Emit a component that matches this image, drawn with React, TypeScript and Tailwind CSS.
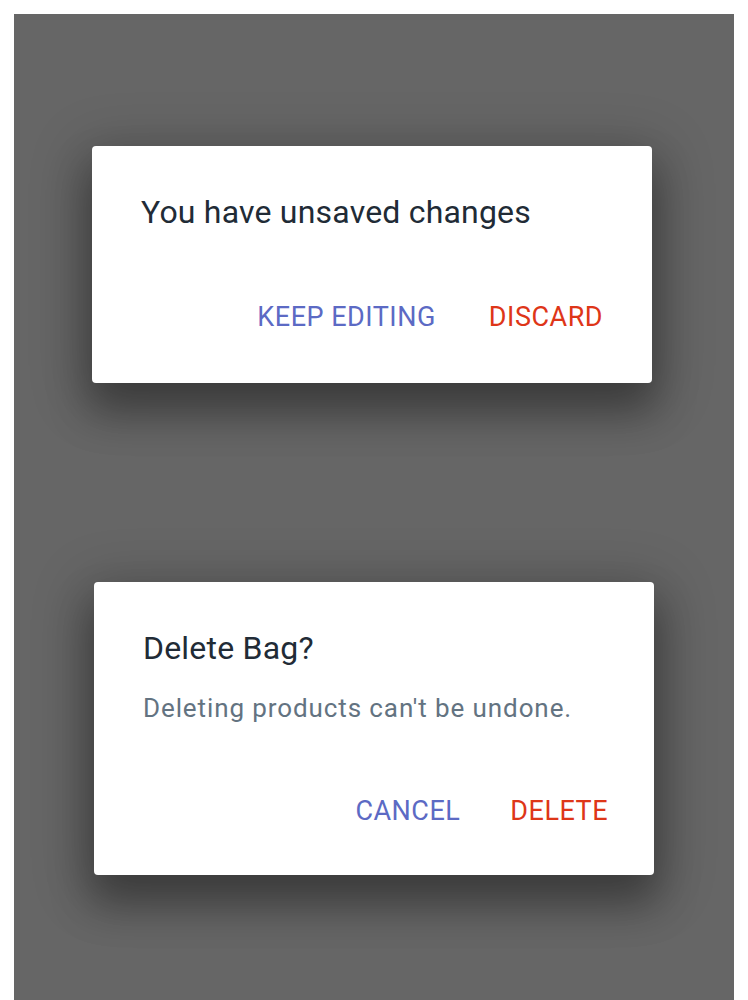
import React from "react";

const font = { fontFamily: "Roboto, 'Noto Sans', sans-serif" };

const dialogShadow =
  "shadow-[0_26px_40px_4px_rgba(0,0,0,0.3),0_10px_55px_10px_rgba(0,0,0,0.2)]";

export default function App() {
  return (
    <div className="min-h-screen bg-white px-[14px] pt-[14px]" style={font}>
      <div className="h-[986px] overflow-hidden bg-[#666666] pt-[132px]">
        {/* unsaved changes */}
        <div className={`ml-[78px] w-[560px] rounded-[4px] bg-white ${dialogShadow}`}>
          <div className="px-[49px] pt-[46px] text-[32px] leading-[40px] tracking-[0.2px] text-[#212b36]">
            You have unsaved changes
          </div>
          <div className="flex justify-end gap-[53px] pb-[50px] pr-[49px] pt-[69px] text-[27px] leading-[32px] tracking-[0.5px]">
            <button className="text-[#5c6ac4]">KEEP EDITING</button>
            <button className="text-[#de3618]">DISCARD</button>
          </div>
        </div>

        {/* delete bag */}
        <div className={`ml-[80px] mt-[199px] w-[560px] rounded-[4px] bg-white ${dialogShadow}`}>
          <div className="px-[49px] pt-[46px] text-[32px] leading-[40px] tracking-[0.2px] text-[#212b36]">
            Delete Bag?
          </div>
          <div className="px-[49px] pt-[24px] text-[26px] leading-[32px] tracking-[0.9px] text-[#637381]">
            Deleting products can't be undone.
          </div>
          <div className="flex justify-end gap-[50px] pb-[48px] pr-[46px] pt-[71px] text-[27px] leading-[32px] tracking-[0.5px]">
            <button className="text-[#5c6ac4]">CANCEL</button>
            <button className="text-[#de3618]">DELETE</button>
          </div>
        </div>
      </div>
    </div>
  );
}
